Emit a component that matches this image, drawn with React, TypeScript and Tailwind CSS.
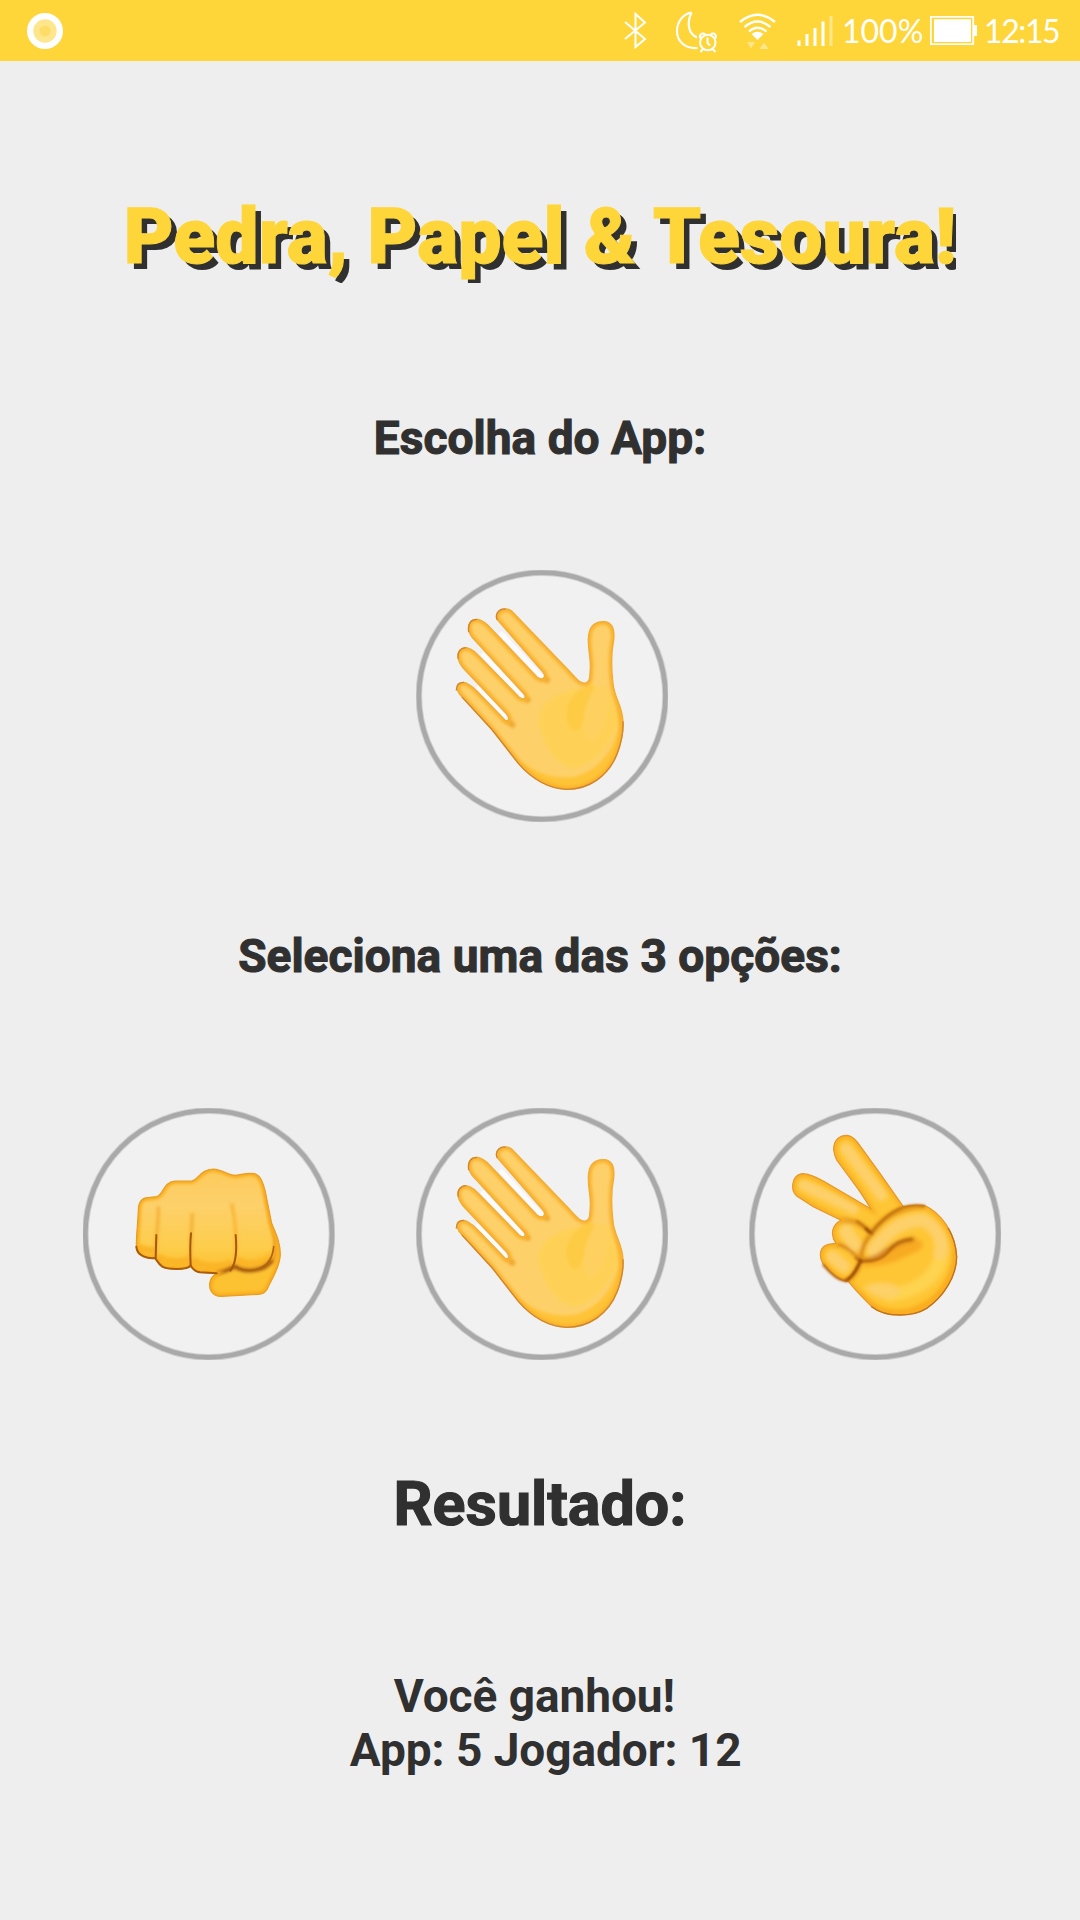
import React from "react";

const HAND =
  "M276 178 C268 155 300 138 320 153 L495 335 C515 358 530 375 545 368 C556 362 554 350 556 325 C558 290 546 262 551 225 C555 190 580 183 600 185 C625 189 629 212 626 240 C618 280 618 320 624 370 C628 415 652 435 654 485 C656 520 648 550 637 580 C610 650 550 688 485 688 C425 685 375 650 340 610 L262 510 L172 412 C150 390 152 368 176 367 C186 367 200 378 215 392 L302 482 C312 484 314 474 305 462 L175 325 C150 295 155 265 182 263 C195 263 206 272 216 282 L342 411 C356 423 366 414 357 402 L202 233 C182 205 190 178 215 178 C228 178 238 186 248 195 L396 351 C410 364 426 352 415 338 Z";

function Choice({ view, cx, cy, label, children }: { view: string; cx: number; cy: number; label: string; children: React.ReactNode }) {
  return (
    <button aria-label={label} className="block size-[252px] shrink-0">
      <svg viewBox={view} className="block size-[252px]">
        <circle cx={cx} cy={cy} r="370" fill="#f1f1f1" stroke="#d0d0d0" strokeWidth="20" />
        <circle cx={cx} cy={cy} r="370" fill="none" stroke="#a9a9a9" strokeWidth="14" />
        {children}
      </svg>
    </button>
  );
}

function Paper({ id }: { id: string }) {
  const clip = id + "-clip";
  return (
    <Choice view="33 30 756 756" cx={411.5} cy={408} label="Papel">
      <defs>
        <clipPath id={clip}><path d={HAND} /></clipPath>
        <filter id={id + "-s"} x="-20%" y="-20%" width="140%" height="140%"><feGaussianBlur stdDeviation="5" /></filter>
      </defs>
      <path d="M290 222 L408 350 M235 285 L352 410 M220 385 L300 474" stroke="#fbfbfb" strokeWidth="14" strokeLinecap="round" />
      <path d={HAND} fill="#fdd06a" />
      <g clipPath={`url(#${clip})`}>
        <g filter={`url(#${id}-s)`}>
          <path d="M500 390 C430 410 395 440 402 490 C415 560 450 610 500 625 C560 625 620 560 640 480 L610 380 L540 385 Z" fill="#fed156" />
          <path d="M530 385 C480 420 470 470 500 510 C530 530 535 470 550 430 C560 400 580 390 560 370 Z" fill="#fecb45" />
          <path d="M565 390 C530 450 530 500 550 540 C590 540 615 460 610 380 Z" fill="#fed05f" />
          <path d="M300 560 C370 640 450 660 510 650 C580 630 640 570 652 440 L690 500 L600 720 L400 720 Z" fill="#fec437" />
          <path d="M620 400 C645 450 640 510 645 560 L680 500 Z" fill="#febb33" />
          <path d="M412 350 L426 360 M356 408 L368 420 M306 480 L322 494" stroke="#efa930" strokeWidth="18" strokeLinecap="round" />
        </g>
        <path d={HAND} fill="none" stroke="#fbb22a" strokeWidth="18" filter={`url(#${id}-s)`} />
      </g>
      <path d={HAND} fill="none" stroke="#efad3c" strokeWidth="4" />
      <path d="M276 178 C268 155 290 145 300 147 M191 215 C187 190 200 178 215 178 M160 295 C155 275 170 263 182 263 M154 390 C154 375 163 367 176 367 M172 412 L262 510 L340 610 C375 650 425 685 485 688 C550 688 610 650 637 580 C648 550 656 520 654 485" fill="none" stroke="#cf8630" strokeWidth="4" strokeLinecap="round" />
    </Choice>
  );
}

const FIST =
  "M190 330 C190 300 205 292 225 292 L245 290 C265 285 265 245 300 243 L350 243 C368 240 378 208 415 207 C440 208 460 225 480 226 C510 222 520 217 538 221 C560 228 566 255 571 275 L590 370 C602 400 616 425 616 465 C614 500 595 530 580 560 C575 575 565 583 550 583 L440 589 C410 590 400 565 405 545 C408 530 418 525 425 520 L375 517 C360 515 352 505 347 497 C335 512 275 508 262 500 C250 492 245 480 240 474 C220 476 190 470 185 450 C181 430 188 380 190 330 Z";

function Rock() {
  return (
    <Choice view="24 24 756 756" cx={401} cy={402} label="Pedra">
      <defs>
        <linearGradient id="rock-g" x1="0" y1="207" x2="0" y2="520" gradientUnits="userSpaceOnUse">
          <stop offset="0" stopColor="#fdcb5c" />
          <stop offset=".35" stopColor="#fdd06a" />
          <stop offset=".75" stopColor="#fdcd4b" />
          <stop offset="1" stopColor="#fdbe2c" />
        </linearGradient>
        <clipPath id="rock-clip"><path d={FIST} /></clipPath>
        <filter id="rock-s" x="-30%" y="-30%" width="160%" height="160%"><feGaussianBlur stdDeviation="5" /></filter>
        <filter id="rock-f" x="-30%" y="-30%" width="160%" height="160%"><feGaussianBlur stdDeviation="2" /></filter>
      </defs>
      <path d={FIST} fill="url(#rock-g)" />
      <g clipPath="url(#rock-clip)">
        <g filter="url(#rock-s)" fill="none">
          <path d="M425 520 L620 440 L620 600 L400 600 Z" fill="#fdc233" />
          <path d="M190 440 C205 452 230 452 240 450 M250 470 C275 490 320 490 345 478 M352 480 C380 505 450 505 470 485 M485 480 C520 500 570 495 595 470" stroke="#fbb526" strokeWidth="22" />
          <path d="M250 320 C252 370 240 420 243 475 M352 340 C350 390 345 440 347 495" stroke="#f5b43a" strokeWidth="11" />
          <path d="M470 310 C484 370 486 440 478 505" stroke="#f7b738" strokeWidth="10" />
          <path d="M572 270 L594 390 C605 430 605 470 590 490" stroke="#ee9f22" strokeWidth="12" />
          <path d="M425 520 C460 512 470 505 480 500 C510 520 570 515 592 480" stroke="#a8560a" strokeWidth="13" />
        </g>
        <path d={FIST} fill="none" stroke="#f9ac1d" strokeWidth="17" filter="url(#rock-s)" />
      </g>
      <path d={FIST} fill="none" stroke="#e89d25" strokeWidth="3.5" />
      <g filter="url(#rock-f)" fill="none" strokeLinecap="round">
        <path d="M184 440 C186 470 220 476 240 474 C245 480 250 492 262 500 C275 508 335 512 347 497 C352 505 360 515 375 517 L425 520" stroke="#a85c0e" strokeWidth="6" />
        <path d="M244 405 L242 474 M348 400 C344 440 346 470 347 497 M482 405 C486 450 484 490 466 512" stroke="#a85808" strokeWidth="6" />
        <path d="M482 500 C520 522 590 515 596 440" stroke="#b0650e" strokeWidth="5" />
      </g>
    </Choice>
  );
}

const PEACE =
  "M281 150 C280 118 300 106 322 106 C340 108 352 125 362 140 L420 220 L490 320 C510 316 530 313 555 317 C600 335 648 400 650 470 C650 530 610 590 560 625 C520 650 440 655 395 620 C370 595 345 570 325 544 C305 545 285 530 270 515 L248 490 C235 465 240 440 265 433 L288 430 C270 405 275 375 303 361 L220 320 L170 288 C150 270 155 225 187 221 C210 222 230 232 250 243 L392 326 C380 305 370 290 355 268 L290 180 C285 170 282 160 281 150 Z";

function Scissors() {
  return (
    <Choice view="27 24 756 756" cx={405.5} cy={402} label="Tesoura">
      <defs>
        <clipPath id="peace-clip"><path d={PEACE} /></clipPath>
        <filter id="peace-s" x="-30%" y="-30%" width="160%" height="160%"><feGaussianBlur stdDeviation="6" /></filter>
        <filter id="peace-f" x="-30%" y="-30%" width="160%" height="160%"><feGaussianBlur stdDeviation="2.5" /></filter>
      </defs>
      <path d={PEACE} fill="#fec635" />
      <g clipPath="url(#peace-clip)">
        <g filter="url(#peace-s)" fill="none" strokeLinecap="round" strokeLinejoin="round">
          <path d="M318 145 L425 285" stroke="#fdd06a" strokeWidth="36" />
          <path d="M190 255 L340 325" stroke="#fdd06a" strokeWidth="34" />
          <path d="M600 420 C620 500 560 570 450 585" stroke="#fed34f" strokeWidth="42" />
          <path d="M370 560 C410 540 480 545 480 575 C460 610 405 600 370 560 Z" fill="#fdd068" />
          <path d="M650 440 C650 540 590 625 480 640 C430 640 400 630 360 590" stroke="#fba91d" strokeWidth="18" />
          <path d="M370 482 C440 480 445 425 540 420 C555 430 550 445 530 455 C490 470 450 500 370 500 Z" fill="#f8aa24" />
          <path d="M395 400 C430 350 480 320 550 318" stroke="#dc8711" strokeWidth="14" />
          <path d="M303 361 C345 358 370 375 395 400 C375 420 365 440 363 475 C355 510 340 535 320 540" stroke="#e08d18" strokeWidth="12" />
          <path d="M288 432 C315 435 340 455 360 482" stroke="#e3921a" strokeWidth="11" />
          <path d="M400 450 C440 400 480 360 550 360 C600 390 615 430 600 460" stroke="#fdd06a" strokeWidth="40" />
          <path d="M318 393 L344 434" stroke="#fdd06a" strokeWidth="42" />
          <path d="M276 470 L312 500" stroke="#fdd06a" strokeWidth="38" />
          <path d="M372 480 C430 480 450 422 520 418" stroke="#c46a08" strokeWidth="11" />
        </g>
        <path d={PEACE} fill="none" stroke="#f9ad20" strokeWidth="18" filter="url(#peace-s)" />
      </g>
      <path d={PEACE} fill="none" stroke="#e5982a" strokeWidth="3.5" />
      <g filter="url(#peace-f)" fill="none" strokeLinecap="round">
        <path d="M350 364 C368 374 380 387 393 400 C410 375 450 335 490 322 C510 316 530 314 552 318" stroke="#bd700f" strokeWidth="7" />
        <path d="M378 386 L394 401 M350 474 L366 484 M318 542 C340 530 352 505 362 482" stroke="#984a06" strokeWidth="9" />
        <path d="M366 484 C400 485 430 475 445 455 C460 435 485 420 515 418" stroke="#b0600c" strokeWidth="6" />
        <path d="M250 495 C280 530 300 545 325 542" stroke="#b0600c" strokeWidth="6" />
        <path d="M393 402 C375 425 364 445 364 470 M295 433 C320 440 340 458 355 476" stroke="#d98c1c" strokeWidth="5" />
      </g>
      <path d="M395 620 C440 655 520 650 560 625 C610 590 650 530 650 470 C648 440 640 410 625 385" fill="none" stroke="#c1721c" strokeWidth="4" strokeLinecap="round" />
    </Choice>
  );
}

function StatusBar() {
  return (
    <header className="flex h-[61px] items-center justify-between bg-[#fed639] pl-[27px] pr-[20px] font-['Lato',sans-serif] text-[32px] leading-[61px] text-white">
      <svg viewBox="0 0 36 36" className="size-9">
        <circle cx="18" cy="18" r="18" fill="#fff" />
        <circle cx="18" cy="18" r="11.7" fill="#fee68c" />
        <circle cx="18" cy="18" r="5.5" fill="#fedc68" />
      </svg>
      <div className="flex items-center">
        <svg viewBox="600 0 240 61" className="h-[61px] w-[240px]" fill="none" stroke="#fff" strokeWidth="2">
          <path d="M625 22 L645 39 L635.5 47 V14 L645 22.5 L625 39" />
          <path d="M691.5 12.5 C683 14 677 22 677 31 C677 42 686 49 697.5 48" strokeWidth="2.2" />
          <path d="M691.5 12.5 C686 24 689 34 697 37.5" strokeWidth="2.2" />
          <circle cx="707.8" cy="42.5" r="7.7" />
          <path d="M707.5 37.5 V43 L710 45.5 M703 49 L700.5 52 M712.5 49 L715.5 52" />
          <path d="M700.5 38.5 C698.5 35 702 32 705.5 34.5 M715 38.5 C717.5 35 714 32 710.5 34.5" />
          <path d="M740 22 Q757.5 7.5 775 22 M744.5 27 Q757.5 16 770.5 27 M749 31.5 Q757.5 24 766.5 31.5" strokeWidth="2.3" />
          <path d="M751.5 34 Q757.5 29.5 763.5 34 L757.5 40 Z" fill="#fff" stroke="none" />
          <path d="M747 42 H755 L751 48.5 Z M759.5 49 H768.5 L764 42.5 Z" fill="#fee68c" stroke="none" />
          <path d="M799 40.5 V46 M807 34 V46 M815 28 V46 M823 21.5 V46" strokeWidth="3" />
          <path d="M831 16 V46" stroke="#fee68c" strokeWidth="3" />
        </svg>
        <span className="w-[90px] pl-[2px]">100%</span>
        <svg viewBox="0 0 47 29" className="mr-[7px] h-[29px] w-[47px]">
          <rect x=".8" y=".8" width="42.4" height="27.4" fill="none" stroke="#fff" strokeWidth="1.8" />
          <rect x="4" y="3.2" width="37" height="22.8" fill="#fff" />
          <rect x="44" y="9" width="3" height="11" fill="#fff" />
        </svg>
        <span className="w-[76px] whitespace-nowrap tracking-[-1.4px]">12:15</span>
      </div>
    </header>
  );
}

export default function App() {
  return (
    <div className="flex h-[1920px] w-[1080px] flex-col overflow-hidden bg-[#eeeeee] font-['Roboto',sans-serif] text-[#303030]">
      <StatusBar />
      <main className="flex flex-col items-center">
        <h1 className="mt-[130px] overflow-hidden whitespace-nowrap text-[77px] font-black leading-[92px] text-[#fed639] [-webkit-text-stroke:1px_#fed639] [text-shadow:6px_6px_0_#303030]">
          Pedra, Papel &amp; Tesoura!
        </h1>
        <h2 className="mt-[128px] whitespace-nowrap text-[46px] font-bold leading-[54px] tracking-[0.05px] [-webkit-text-stroke:1.1px_#303030]">Escolha do App:</h2>
        <div className="mt-[105px] flex w-[1080px] pl-[416px]">
          <Paper id="app-paper" />
        </div>
        <h2 className="mt-[107px] whitespace-nowrap text-[46px] font-bold leading-[54px] tracking-[0.05px] [-webkit-text-stroke:1.1px_#303030]">Seleciona uma das 3 opções:</h2>
        <div className="mt-[125px] flex w-[1080px] gap-[81px] pl-[83px]">
          <Rock />
          <Paper id="user-paper" />
          <Scissors />
        </div>
        <h2 className="mt-[108px] whitespace-nowrap text-[61px] font-bold leading-[72px] [-webkit-text-stroke:1.2px_#303030]">Resultado:</h2>
        <p className="mt-[129px] whitespace-pre text-center text-[46px] font-bold leading-[54px] tracking-[-0.05px]">
          {"Você ganhou! \n App: 5 Jogador: 12"}
        </p>
      </main>
    </div>
  );
}
